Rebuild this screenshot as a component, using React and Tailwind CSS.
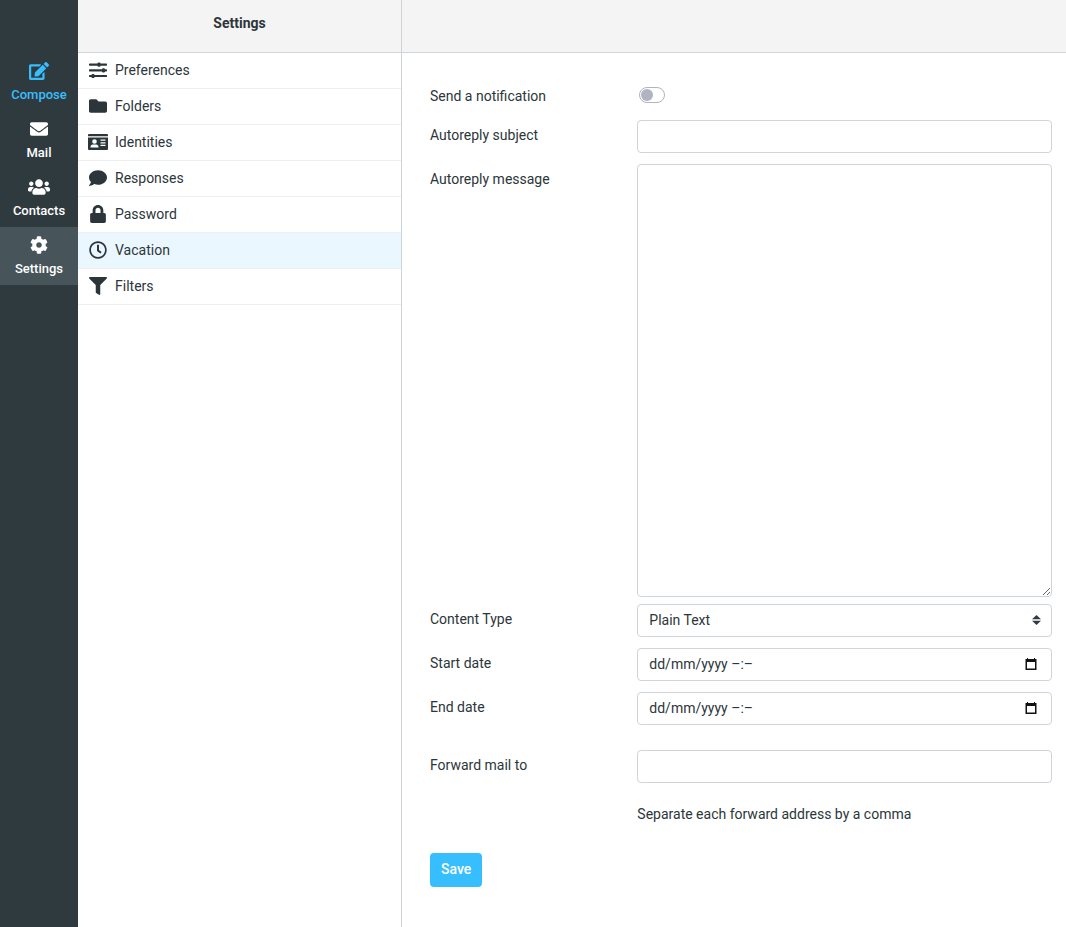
import {
  FaCog,
  FaComment,
  FaEdit,
  FaEnvelope,
  FaFilter,
  FaFolder,
  FaLock,
  FaRegClock,
  FaUsers,
} from 'react-icons/fa';

function SlidersIcon({ className }) {
  return (
    <svg viewBox="0 0 20 20" className={className} fill="currentColor" aria-hidden="true">
      <rect x="1" y="3.500" width="18" height="2.200" rx=".6" />
      <rect x="9.500" y="2.500" width="3" height="4.200" rx="1.200" />
      <rect x="1" y="9.200" width="18" height="2.200" rx=".6" />
      <rect x="14" y="8.200" width="3" height="4.200" rx="1.200" />
      <rect x="1" y="14.900" width="18" height="2.200" rx=".6" />
      <rect x="3.500" y="13.900" width="3" height="4.200" rx="1.200" />
    </svg>
  );
}

function IdCardIcon({ className }) {
  return (
    <svg viewBox="0 0 20 20" className={className} fill="currentColor" aria-hidden="true">
      <path d="M1 2h18a1 1 0 0 1 1 1v1.200H0V3a1 1 0 0 1 1-1z" />
      <path
        fillRule="evenodd"
        d="M0 5.500h20V17a1 1 0 0 1-1 1H1a1 1 0 0 1-1-1zM6.500 7.200a2.300 2.300 0 1 0 0 4.600 2.300 2.300 0 0 0 0-4.600zM2.500 15.600h8v-.9c0-1.300-1-2.300-2.300-2.300H4.800c-1.300 0-2.300 1-2.300 2.300zM12.500 7.600v1.200h5V7.600zM12.500 10.200v1.200h5v-1.200zM12.500 12.800V14h5v-1.200z"
      />
    </svg>
  );
}

const taskMenu = [
  { label: 'Compose', icon: FaEdit, iconClass: 'size-5', accent: true },
  { label: 'Mail', icon: FaEnvelope, iconClass: 'size-[18px]' },
  { label: 'Contacts', icon: FaUsers, iconClass: 'size-[22px]' },
  { label: 'Settings', icon: FaCog, iconClass: 'size-[18px]', active: true },
];

const sections = [
  { label: 'Preferences', icon: SlidersIcon },
  { label: 'Folders', icon: FaFolder },
  { label: 'Identities', icon: IdCardIcon },
  { label: 'Responses', icon: FaComment },
  { label: 'Password', icon: FaLock },
  { label: 'Vacation', icon: FaRegClock, active: true },
  { label: 'Filters', icon: FaFilter },
];

const fieldClass =
  'block w-full h-[33px] rounded border border-[#ced4da] bg-white px-[11px] pb-0.5 text-sm text-[#2c363a] focus:outline-none focus:border-[#37beff]';

function TaskMenu() {
  return (
    <nav className="w-[78px] shrink-0 bg-[#2f3a3f] pt-[53px]">
      {taskMenu.map(({ label, icon: Icon, iconClass, accent, active }) => (
        <a
          key={label}
          href="#"
          className={`flex h-[58px] flex-col items-center pt-2 text-[13px] leading-5 font-medium ${
            accent ? 'text-[#37beff]' : 'text-white'
          } ${active ? 'bg-[#47545a]' : ''}`}
        >
          <span className="mb-1 flex h-5 items-center">
            <Icon className={iconClass} />
          </span>
          {label}
        </a>
      ))}
    </nav>
  );
}

function SectionList() {
  return (
    <aside className="w-[324px] shrink-0 border-r border-[#ced4da]">
      <header className="h-[53px] border-b border-[#ced4da] bg-[#f4f4f4] pt-3 text-center">
        <h1 className="text-sm font-bold leading-[22px]">Settings</h1>
      </header>
      <ul>
        {sections.map(({ label, icon: Icon, active }) => (
          <li key={label} className="border-b border-[#edeff0]">
            <a
              href="#"
              className={`flex h-[35px] items-center pb-0.5 pl-[10px] text-sm ${active ? 'bg-[#ebf7fe]' : ''}`}
            >
              <span className="mr-[7px] flex w-5 justify-center">
                <Icon className={Icon === SlidersIcon || Icon === IdCardIcon ? 'size-5' : 'size-[18px]'} />
              </span>
              {label}
            </a>
          </li>
        ))}
      </ul>
    </aside>
  );
}

function Row({ label, id, children, className = 'mb-[11px]' }) {
  return (
    <div className={`flex ${className}`}>
      <label htmlFor={id} className="w-1/3 shrink-0 pt-1 leading-[22px]">
        {label}
      </label>
      <div className="min-w-0 flex-1">{children}</div>
    </div>
  );
}

function DateField({ id }) {
  return (
    <div className="relative">
      <input id={id} type="text" placeholder="dd/mm/yyyy –:–" className={`${fieldClass} placeholder:text-[#2c363a]`} />
      <button
        type="button"
        aria-label="Pick a date"
        className="absolute inset-y-0 right-[15px] flex items-center pb-0.5"
      >
        <svg viewBox="0 0 12 12" className="size-3">
          <path d="M2 0h1v1h6V0h1v1h1.500v11H.5V1H2zM2 4v6.500h8V4z" fill="#111" fillRule="evenodd" />
        </svg>
      </button>
    </div>
  );
}

function VacationForm() {
  return (
    <form className="pt-7 pr-[14px] pb-10 pl-7 text-sm" onSubmit={(e) => e.preventDefault()}>
      <Row label="Send a notification" id="notify" className="mb-[9px] h-[30px]">
        <input
          id="notify"
          type="checkbox"
          className="mt-1.5 ml-0.5 block h-4 w-[26px] appearance-none rounded-full border border-[#adb5bd] bg-white before:m-px before:block before:size-3 before:rounded-full before:bg-[#b0b3c0] checked:before:ml-[11px] checked:before:bg-[#37beff]"
        />
      </Row>
      <Row label="Autoreply subject" id="subject">
        <input id="subject" type="text" className={fieldClass} />
      </Row>
      <Row label="Autoreply message" id="message" className="mb-[7px]">
        <textarea
          id="message"
          className="block h-[433px] w-full resize-y rounded border border-[#ced4da] bg-white px-[11px] py-1.5 focus:border-[#37beff] focus:outline-none"
        />
      </Row>
      <Row label="Content Type" id="content-type">
        <div className="relative">
          <select id="content-type" className={`${fieldClass} appearance-none`}>
            <option>Plain Text</option>
            <option>HTML</option>
          </select>
          <svg
            viewBox="0 0 9 10"
            className="pointer-events-none absolute top-[11px] right-[11px] h-[10px] w-[9px]"
            fill="#343a40"
          >
            <path d="M4.500 0 0 4.200h9zM4.500 10 0 5.800h9z" />
          </svg>
        </div>
      </Row>
      <Row label="Start date" id="start-date">
        <DateField id="start-date" />
      </Row>
      <Row label="End date" id="end-date" className="mb-[25px]">
        <DateField id="end-date" />
      </Row>
      <Row label="Forward mail to" id="forward">
        <input id="forward" type="text" className={fieldClass} />
        <p className="mt-5 leading-[22px]">Separate each forward address by a comma</p>
      </Row>
      <button
        type="submit"
        className="mt-[17px] h-[34px] rounded-sm bg-[#37beff] px-[11px] pb-0.5 text-sm font-medium text-white cursor-pointer"
      >
        Save
      </button>
    </form>
  );
}

export default function App() {
  return (
    <div className="flex min-h-screen bg-white font-['Roboto',sans-serif] text-[#2c363a]">
      <TaskMenu />
      <SectionList />
      <main className="min-w-0 flex-1">
        <div className="h-[53px] border-b border-[#ced4da] bg-[#f4f4f4]" />
        <VacationForm />
      </main>
    </div>
  );
}
